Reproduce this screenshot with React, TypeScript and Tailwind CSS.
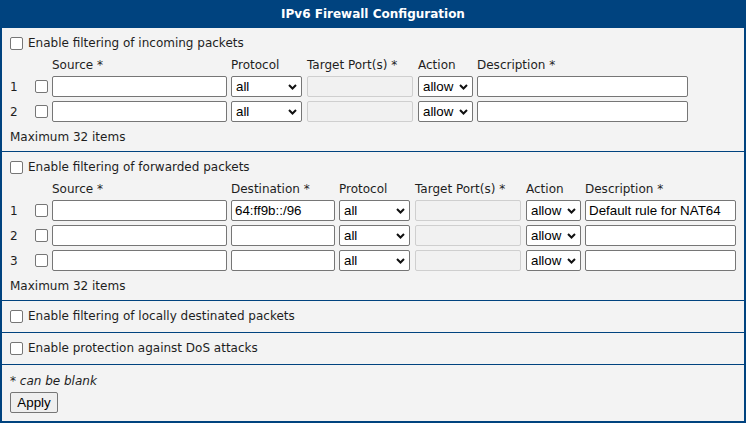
import React from 'react';

type Kind = 'text' | 'select' | 'disabled';

interface Col {
    label: string;
    w: string;
    ml: string;
    kind: Kind;
    key: string;
}

interface Section {
    title: string;
    cols: Col[];
    rows: Record<string, string>[];
}

const incoming: Section = {
    title: 'Enable filtering of incoming packets',
    cols: [
        { key: 'src', label: 'Source *', w: 'w-[175px]', ml: 'ml-[4px]', kind: 'text' },
        { key: 'proto', label: 'Protocol', w: 'w-[71px]', ml: 'ml-[4px]', kind: 'select' },
        { key: 'port', label: 'Target Port(s) *', w: 'w-[106px]', ml: 'ml-[5px]', kind: 'disabled' },
        { key: 'action', label: 'Action', w: 'w-[55px]', ml: 'ml-[5px]', kind: 'select' },
        { key: 'desc', label: 'Description *', w: 'w-[211px]', ml: 'ml-[4px]', kind: 'text' },
    ],
    rows: [{}, {}],
};

const forwarded: Section = {
    title: 'Enable filtering of forwarded packets',
    cols: [
        { key: 'src', label: 'Source *', w: 'w-[175px]', ml: 'ml-[4px]', kind: 'text' },
        { key: 'dst', label: 'Destination *', w: 'w-[104px]', ml: 'ml-[4px]', kind: 'text' },
        { key: 'proto', label: 'Protocol', w: 'w-[71px]', ml: 'ml-[4px]', kind: 'select' },
        { key: 'port', label: 'Target Port(s) *', w: 'w-[106px]', ml: 'ml-[5px]', kind: 'disabled' },
        { key: 'action', label: 'Action', w: 'w-[55px]', ml: 'ml-[5px]', kind: 'select' },
        { key: 'desc', label: 'Description *', w: 'w-[151px]', ml: 'ml-[4px]', kind: 'text' },
    ],
    rows: [{ dst: '64:ff9b::/96', desc: 'Default rule for NAT64' }, {}, {}],
};

const Box = () => (
    <span className="inline-block w-[13px] h-[13px] shrink-0 rounded-[2px] border border-[#767676] bg-white" />
);

const CheckLine: React.FC<{ text: string }> = ({ text }) => (
    <label className="flex items-center h-[16px] gap-[5px]">
        <Box />
        <span>{text}</span>
    </label>
);

const Chevron = () => (
    <svg className="absolute right-[5px] top-[8px] pointer-events-none" width="9" height="6" viewBox="0 0 9 6">
        <polyline points="1,1 4.5,4.5 8,1" fill="none" stroke="#111" strokeWidth="2" />
    </svg>
);

const Field: React.FC<{ col: Col; value?: string }> = ({ col, value }) => {
    const input = "h-[21px] rounded-[2px] border px-[3px] text-[13.33px] font-['Liberation_Sans',Arial,sans-serif] text-black outline-none";
    if (col.kind === 'select') {
        const opt = col.key === 'action' ? 'allow' : 'all';
        return (
            <div className={`relative shrink-0 ${col.w} ${col.ml}`}>
                <select
                    defaultValue={opt}
                    className={`${input} w-full appearance-none border-[#767676] bg-white pl-[4px]`}
                >
                    <option value={opt}>{opt}</option>
                </select>
                <Chevron />
            </div>
        );
    }
    return (
        <input
            type="text"
            disabled={col.kind === 'disabled'}
            defaultValue={value ?? ''}
            className={`${input} shrink-0 ${col.w} ${col.ml} ${
                col.kind === 'disabled' ? 'border-[#cfcfcf] bg-[#f1f1f1]' : 'border-[#767676] bg-white'
            }`}
        />
    );
};

const RuleSection: React.FC<{ section: Section }> = ({ section }) => (
    <div className="px-[8px] pt-[7px] pb-[8px] border-b border-[#00437f]">
        <CheckLine text={section.title} />
        <div className="flex mt-[5px] h-[16px] pt-[1px]">
            <span className="w-[38px] shrink-0" />
            {section.cols.map((c) => (
                <span key={c.key} className={`shrink-0 whitespace-nowrap ${c.w} ${c.ml}`}>
                    {c.label}
                </span>
            ))}
        </div>
        {section.rows.map((r, i) => (
            <div key={i} className="flex items-center mt-[4px] h-[21px]">
                <span className="w-[25px] shrink-0">{i + 1}</span>
                <Box />
                {section.cols.map((c) => (
                    <Field key={c.key} col={c} value={r[c.key]} />
                ))}
            </div>
        ))}
        <div className="mt-[5px] h-[16px] pt-[2px] leading-[16px]">Maximum 32 items</div>
    </div>
);

export default function App() {
    return (
        <div className="w-[746px] h-[423px] flex flex-col bg-[#f3f3f3] text-[12px] leading-[16px] text-[#1e1e1e] font-['DejaVu_Sans',sans-serif]">
            <div className="h-[28px] shrink-0 flex items-center justify-center bg-[#00437f] text-white font-bold">
                IPv6 Firewall Configuration
            </div>
            <div className="flex-1 flex flex-col border-x-2 border-b-2 border-[#00437f]">
                <RuleSection section={incoming} />
                <RuleSection section={forwarded} />
                <div className="px-[8px] pt-[7px] pb-[8px] border-b border-[#00437f]">
                    <CheckLine text="Enable filtering of locally destinated packets" />
                </div>
                <div className="px-[8px] pt-[7px] pb-[8px] border-b border-[#00437f]">
                    <CheckLine text="Enable protection against DoS attacks" />
                </div>
                <div className="px-[8px] pt-[7px]">
                    <div className="h-[16px] pt-[1px] italic">* can be blank</div>
                    <button className="mt-[4px] h-[21px] w-[48px] rounded-[2px] border border-[#767676] bg-[#efefef] text-[13.33px] text-black font-['Liberation_Sans',Arial,sans-serif]">
                        Apply
                    </button>
                </div>
            </div>
        </div>
    );
}
